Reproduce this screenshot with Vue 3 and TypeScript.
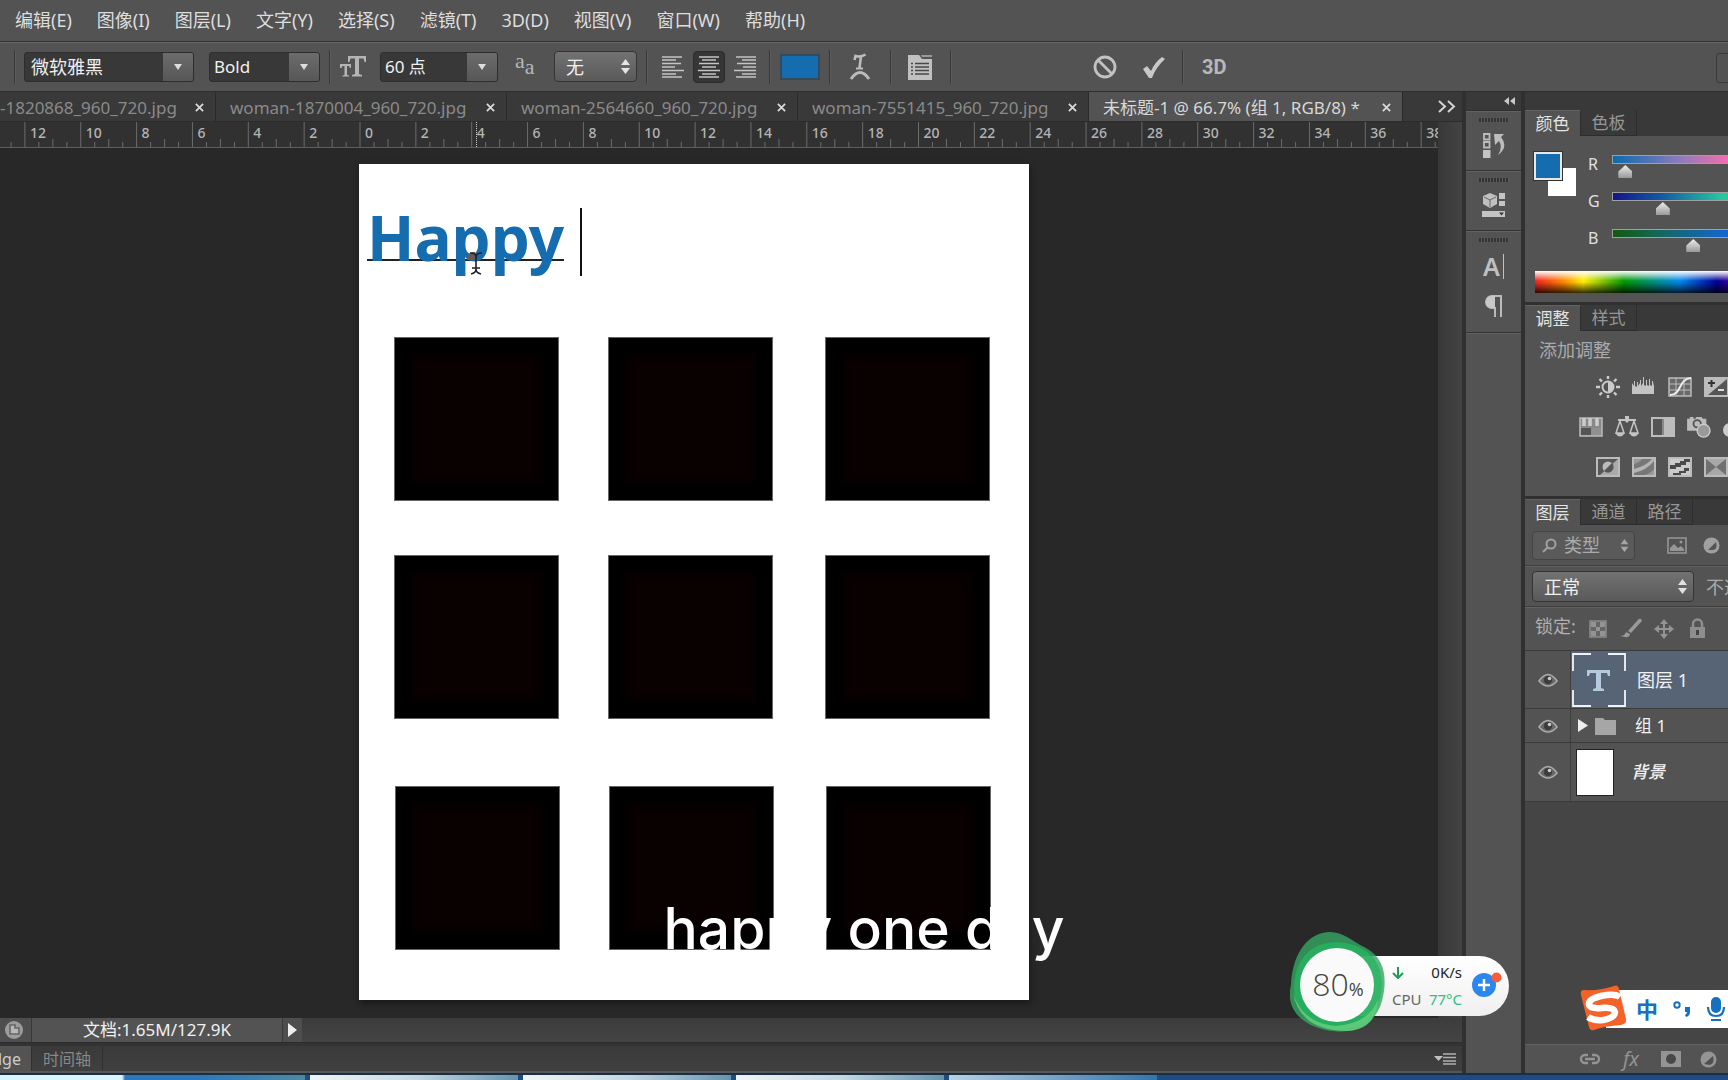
<script setup lang="ts">
import { ref } from 'vue'

interface DocTab { title: string; active?: boolean }
interface Channel { label: string; value: number; track: string }

const menus = ['编辑(E)', '图像(I)', '图层(L)', '文字(Y)', '选择(S)', '滤镜(T)', '3D(D)', '视图(V)', '窗口(W)', '帮助(H)']

const docTabs: DocTab[] = [
  { title: '-1820868_960_720.jpg' },
  { title: 'woman-1870004_960_720.jpg' },
  { title: 'woman-2564660_960_720.jpg' },
  { title: 'woman-7551415_960_720.jpg' },
  { title: '未标题-1 @ 66.7% (组 1, RGB/8) *', active: true },
]

const RULER_ORIGIN = 360
const RULER_STEP = 55.85
const majors = Array.from({ length: 27 }, (_, i) => i - 7).map(n => ({
  x: RULER_ORIGIN + n * RULER_STEP,
  label: n < -6 ? '' : String(Math.abs(n * 2)),
}))

const frames = [
  { x: 35, y: 173 }, { x: 249, y: 173 }, { x: 466, y: 173 },
  { x: 35, y: 391 }, { x: 249, y: 391 }, { x: 466, y: 391 },
  { x: 36, y: 622 }, { x: 250, y: 622 }, { x: 467, y: 622 },
]

const channels = ref<Channel[]>([
  { label: 'R', value: 13, track: 'linear-gradient(90deg, #0a6bae, #8a7cba 55%, #ff6bae)' },
  { label: 'G', value: 104, track: 'linear-gradient(90deg, #14148c, #1358a4 40%, #26c8a0 92%)' },
  { label: 'B', value: 178, track: 'linear-gradient(90deg, #13590f, #13685a 38%, #1366d8)' },
])

const alignment = ref('center')
</script>

<template>
  <div class="app">
    <nav class="menubar">
      <button v-for="m in menus" :key="m" class="menu">{{ m }}</button>
    </nav>

    <div class="options">
      <span class="sep first"></span>
      <label class="combo family"><select aria-label="字体"><option>微软雅黑</option></select><i></i></label>
      <label class="combo weight"><select aria-label="字体样式"><option>Bold</option></select><i></i></label>
      <span class="sep"></span>
      <svg class="ico-tt" width="26" height="26" viewBox="0 0 26 26" fill="#b4b4b4">
        <path d="M8 2h18v6h-1.500l-1-3.500H19V20l3 1v1.500h-10V21l3-1V4.500h-4.500L9.500 8H8z" />
        <path d="M0 10h11v4h-1l-1-2H7v9l2 .6v1H2.500v-1L4.500 21v-9h-2l-1 2H0z" />
      </svg>
      <label class="combo size"><select aria-label="字号"><option>60 点</option></select><i></i></label>
      <span class="aa"><span>a</span><span>a</span></span>
      <label class="drop anti"><select aria-label="消除锯齿"><option>无</option></select><svg width="9" height="15" viewBox="0 0 9 15"><path d="M0 6l4.500-6L9 6zM0 9l4.500 6L9 9z" fill="#e4e4e4" /></svg></label>
      <span class="sep"></span>
      <div class="aligns">
        <button v-for="a in ['left', 'center', 'right']" :key="a" :aria-label="a" :class="['align', { on: alignment === a }]" @click="alignment = a">
          <svg width="22" height="22" viewBox="0 0 22 22" stroke="#c4c4c4" stroke-width="1.300">
            <path v-if="a === 'left'" d="M0 1h20M0 4h14M0 7.500h19M0 11h13M0 14.500h22M0 18h14M0 21h20" />
            <path v-else-if="a === 'center'" d="M1 1h20M4 4h14M1 7.500h20M4 11h14M0 14.500h22M4 18h14M1 21h20" />
            <path v-else d="M2 1h20M8 4h14M3 7.500h19M9 11h13M0 14.500h22M8 18h14M2 21h20" />
          </svg>
        </button>
      </div>
      <span class="sep"></span>
      <button class="ink" aria-label="文本颜色"></button>
      <span class="sep"></span>
      <button class="tool warp" aria-label="变形文字">
        <svg width="22" height="28" viewBox="0 0 22 28" fill="none" stroke="#bcbcbc"><path d="M5.500 7l1-4q5 1.500 10-1.500M12 3l-1.500 12" stroke-width="2.600" /><path d="M7 15.500h7" stroke-width="2" /><path d="M2 26q9-13 18 0" stroke-width="3" /></svg>
      </button>
      <span class="sep"></span>
      <button class="tool panel" aria-label="字符面板">
        <svg width="24" height="26" viewBox="0 0 24 26"><path d="M0 1h11l3 4h10v21H0z" fill="#c0c0c0" /><path d="M13 1h11v2H14z" fill="#999" /><path d="M3 9.500h2M7 9.500h14M3 13h2M7 13h14M3 16.500h2M7 16.500h14M3 20h2M7 20h14" stroke="#474747" stroke-width="1.500" /></svg>
      </button>
      <span class="sep"></span>
      <button class="tool cancel" aria-label="取消">
        <svg width="24" height="24" viewBox="0 0 24 24" fill="none" stroke="#c2c2c2" stroke-width="2.800"><circle cx="12" cy="12" r="10" /><path d="M5 5l14 14" /></svg>
      </button>
      <button class="tool commit" aria-label="提交">
        <svg width="24" height="22" viewBox="0 0 24 22"><path d="M1 13l4-3 4 5Q13 6 20 1l3 2Q14 11 10 22H7z" fill="#c8c8c8" /></svg>
      </button>
      <span class="sep"></span>
      <button class="tool three">3D</button>
      <button class="edge" aria-label="工作区"></button>
    </div>

    <div class="work">
      <main class="editor">
        <div class="tabs">
          <div v-for="t in docTabs" :key="t.title" :class="['tab', { active: t.active }]">
            <span>{{ t.title }}</span>
            <button class="close" aria-label="关闭"><svg width="9" height="9" viewBox="0 0 10 10" stroke="#dadada" stroke-width="2"><path d="M1 1l8 8M9 1L1 9" /></svg></button>
          </div>
          <button class="more" aria-label="更多"><svg width="18" height="13" viewBox="0 0 18 13" fill="none" stroke="#d4d4d4" stroke-width="2"><path d="M1 1l6 5.500-6 5.500M10 1l6 5.500-6 5.500" /></svg></button>
        </div>

        <div class="stage">
          <div class="view">
            <svg class="ruler" width="100%" height="26">
              <g v-for="m in majors" :key="m.x" stroke="#6c6c6c">
                <path :d="`M${m.x} 0V25M${m.x + 14} 20V25M${m.x + 28} 17V25M${m.x + 42} 20V25`" />
                <text v-if="m.label" :x="m.x + 5" y="16">{{ m.label }}</text>
              </g>
              <path d="M476.500 0V25" stroke="#ccc" stroke-dasharray="1 1" />
            </svg>
            <div class="canvas">
              <div class="page">
                <div v-for="(f, i) in frames" :key="i" class="frame" :style="{ left: f.x + 'px', top: f.y + 'px' }"></div>
                <span class="headline">Happy</span>
                <span class="caret"></span>
                <svg class="cursor" width="20" height="30" viewBox="0 0 20 30" fill="none" stroke="#222" stroke-width="1.600"><path d="M1 8l5-4h3v8H1z" fill="#6d5a55" stroke="none" /><path d="M4 5q6 0 6 4v12q0 4-5 5M16 5q-6 0-6 4v12q0 4 5 5M6 20h8" /></svg>
              </div>
            </div>
          </div>
          <div class="vscroll"></div>
        </div>

        <div class="status">
          <button class="badge" aria-label="状态"><svg width="18" height="18" viewBox="0 0 18 18"><circle cx="9" cy="9" r="9" fill="#9c9c9c" /><path d="M5 4h5v3h4v6H5z" fill="#b8b8b8" stroke="#666" stroke-width="1.600" /></svg></button>
          <span class="doc">文档:1.65M/127.9K</span>
          <button class="go" aria-label="展开"><svg width="9" height="14" viewBox="0 0 9 14"><path d="M0 0l9 7-9 7z" fill="#eee" /></svg></button>
        </div>
        <div class="timeline">
          <button class="ttab on">dge</button>
          <button class="ttab">时间轴</button>
          <svg class="flyout" width="22" height="12" viewBox="0 0 22 12"><path d="M0 3h9L4.500 8z" fill="#c0c0c0" /><path d="M9 1h13M9 4.500h13M9 8h13M9 11h13" stroke="#b0b0b0" stroke-width="1.300" /></svg>
        </div>
      </main>

      <aside class="dock">
        <div class="dockhead"><svg width="11" height="8" viewBox="0 0 11 8"><path d="M5 0v8L0 4zM11 0v8L6 4z" fill="#c8c8c8" /></svg></div>
        <div class="cell"><span class="grip"></span>
          <button aria-label="历史记录"><svg width="24" height="27" viewBox="0 0 24 27"><path d="M2 2h5.500v5.500H2zM2 10h5.500v5.500H2z" fill="none" stroke="#bbb" stroke-width="1.800" /><path d="M1 18h7.500v8H1z" fill="#c4c4c4" /><path d="M12 2h10l-3 3q8 10-3 18 5-8 1-14l-4 4z" fill="#bdbdbd" /></svg></button>
        </div>
        <div class="cell"><span class="grip"></span>
          <button aria-label="属性"><svg width="24" height="26" viewBox="0 0 24 26"><path d="M1 4l7-3 7 3v8l-7 4-7-4z" fill="#c0c0c0" /><path d="M2 5l6 3 6-3M8 8v7" fill="none" stroke="#666" /><path d="M17 1h6v6h-6zM17 9h6v5h-6zM0 19h23v6H0z" fill="#c4c4c4" /><path d="M17 20.500h5l-2.500 3z" fill="#333" /></svg></button>
        </div>
        <div class="cell tall"><span class="grip"></span>
          <button class="char" aria-label="字符">A<span></span></button>
          <button aria-label="段落"><svg width="18" height="22" viewBox="0 0 18 22"><path d="M17 1H7a6 6 0 0 0 0 12h3v9M16 1v21" fill="none" stroke="#bbb" stroke-width="2" /><path d="M10 1H7a6 6 0 0 0 0 12h3z" fill="#c8c8c8" /></svg></button>
        </div>
        <div class="dockrest"></div>
      </aside>

      <aside class="panels">
        <div class="panelhead"></div>
        <section class="colors">
          <div class="ptabs"><button class="on">颜色</button><button>色板</button></div>
          <div class="mixer">
            <div class="wells"><span class="bgwell"></span><span class="fgwell"></span></div>
            <div class="channels">
              <label v-for="c in channels" :key="c.label">{{ c.label }}<input v-model.number="c.value" type="range" min="0" max="255" :style="{ backgroundImage: c.track }" /></label>
            </div>
          </div>
          <div class="spectrum"></div>
        </section>

        <section class="adjust">
          <div class="ptabs"><button class="on">调整</button><button>样式</button></div>
          <p>添加调整</p>
          <div class="arow">
            <svg viewBox="0 0 24 22"><circle cx="12" cy="11" r="5.500" fill="none" stroke="#ccc" stroke-width="2" /><path d="M12 6a5 5 0 0 1 0 10z" fill="#ccc" /><path d="M12 0v3M12 19v3M0 11h4M20 11h4M3.500 3l2.500 2.500M18 16.500l2.500 2.500M3.500 19L6 16.500M18 5.500L20.500 3" stroke="#ccc" stroke-width="2.400" /></svg>
            <svg viewBox="0 0 24 22"><path d="M0 18V7l2 3V5h1v5l2 1V6h1v4l2-3V4h1v6l2-3V1h1v8l2 1V4h1v5l2 1V3h1v6l2 1V5h1v5l1-4v12z" fill="#c4c4c4" /></svg>
            <svg viewBox="0 0 24 22"><path d="M1 2h22v18H1z" fill="#6a6a6a" stroke="#bbb" stroke-width="1.500" /><path d="M1 8h22M1 14h22M8 2v18M16 2v18" stroke="#bbb" /><path d="M2 19c12 0 8-16 21-17" fill="none" stroke="#eee" stroke-width="2" /></svg>
            <svg viewBox="0 0 24 22"><path d="M0 1h24v20H0z" fill="#bcbcbc" /><path d="M23 3v16H4z" fill="#555" /><path d="M4 7h7M7.500 4v7" stroke="#333" stroke-width="2" /><path d="M14 14h6" stroke="#ddd" stroke-width="2" /></svg>
          </div>
          <div class="arow wide">
            <svg viewBox="0 0 24 22"><path d="M1 2h22v18H1z" fill="#888" stroke="#bbb" stroke-width="1.500" /><path d="M5 2v8M11 2v8M18 2v8" stroke="#ccc" stroke-width="3.500" /><path d="M2 12h20v7H2z" fill="#555" /><path d="M12 12h10v7H12z" fill="#909090" /></svg>
            <svg viewBox="0 0 24 22"><path d="M10 0h4v3h7v2h-7l-2 2-2-2H3V3h7z" fill="#c4c4c4" /><path d="M5 5L1 17h8zM19 5l-4 12h8z" fill="none" stroke="#c4c4c4" stroke-width="1.500" /><path d="M0 17h10q-5 7-10 0zM14 17h10q-5 7-10 0z" fill="#c4c4c4" /></svg>
            <svg viewBox="0 0 24 22"><path d="M0 1h24v20H0z" fill="#bcbcbc" /><path d="M2 3h9v16H2z" fill="#555" /><path d="M11 3h2v16h-2z" fill="#888" /></svg>
            <svg viewBox="0 0 26 24"><path d="M0 3h3V1h4v2h2l1-2h6l1 2h4v13H0z" fill="#bbb" /><circle cx="11" cy="8.500" r="4" fill="#bbb" stroke="#555" stroke-width="2" /><circle cx="18" cy="16" r="7" fill="#999" stroke="#ccc" stroke-width="1.500" /></svg>
            <svg viewBox="0 0 24 22"><circle cx="12" cy="7" r="6" fill="#bbb" /><circle cx="7" cy="14" r="7" fill="#ccc" /></svg>
          </div>
          <div class="arow">
            <svg viewBox="0 0 24 22"><path d="M1 2h22v18H1z" fill="#575757" stroke="#bbb" stroke-width="2" /><path d="M22 3v16H4z" fill="#aaa" /><circle cx="12" cy="11" r="5.500" fill="#bbb" /><path d="M8 15a5.500 5.500 0 0 0 8-8z" fill="#555" /></svg>
            <svg viewBox="0 0 24 22"><path d="M1 2h22v18H1z" fill="#777" stroke="#bbb" stroke-width="2" /><path d="M2 13Q14 10 20 3h2v2Q15 14 2 17z" fill="#b4b4b4" /><path d="M2 3h8Q7 7 2 8zM22 19h-9q6-2 9-6z" fill="#9a9a9a" /></svg>
            <svg viewBox="0 0 24 22"><path d="M1 2h22v18H1z" fill="#ccc" stroke="#bbb" stroke-width="2" /><path d="M2 9h5V7h5V5h4V3h6v3h-4v3h-5v2H8v2H2zM5 19v-2h6v-2h5v-3h5v3h-3v2h-5v2z" fill="#4b4b4b" /></svg>
            <svg viewBox="0 0 24 22"><path d="M1 2h22v18H1z" fill="#707070" stroke="#bbb" stroke-width="2" /><path d="M2 3h20L12 11l10 8H2l10-8z" fill="#a8a8a8" /></svg>
          </div>
        </section>

        <section class="layers">
          <div class="ptabs"><button class="on">图层</button><button>通道</button><button>路径</button></div>
          <div class="filter">
            <label class="drop kind"><svg class="lens" width="15" height="15" viewBox="0 0 15 15" fill="none" stroke="#a0a0a0" stroke-width="2"><circle cx="9" cy="6" r="4.500" /><path d="M6 9l-5 5" /></svg><select aria-label="图层类型"><option>类型</option></select><svg width="9" height="13" viewBox="0 0 9 15"><path d="M0 6l4.500-6L9 6zM0 9l4.500 6L9 9z" fill="#a4a4a4" /></svg></label>
            <svg width="20" height="17" viewBox="0 0 20 17"><path d="M1 1h18v15H1z" fill="none" stroke="#969696" stroke-width="1.600" /><path d="M3 14v-3l4-4 4 4 3-2 3 3v2z" fill="#969696" /><circle cx="14" cy="5" r="1.500" fill="#969696" /></svg>
            <svg width="17" height="17" viewBox="0 0 17 17"><circle cx="8.500" cy="8.500" r="8" fill="#a0a0a0" /><path d="M5 13l8-8q2 7-3 8z" fill="#555" /></svg>
          </div>
          <div class="blend">
            <label class="drop mode"><select aria-label="混合模式"><option>正常</option></select><svg width="9" height="15" viewBox="0 0 9 15"><path d="M0 6l4.500-6L9 6zM0 9l4.500 6L9 9z" fill="#e0e0e0" /></svg></label>
            <span>不透</span>
          </div>
          <div class="locks">
            <span>锁定:</span>
            <svg viewBox="0 0 22 22"><path d="M3 3h16v16H3z" fill="#666" stroke="#8c8c8c" stroke-width="1.500" /><path d="M4 4h5v5H4zM13 4h5v5h-5zM9 9h4v4H9zM4 13h5v5H4zM13 13h5v5h-5z" fill="#949494" /></svg>
            <svg viewBox="0 0 22 22"><path d="M21 1q2 2-1 4l-9 10-3-2 9-10q2-3 4-2zM0 18q5 0 6-4l4 2q0 5-10 2z" fill="#999" /></svg>
            <svg viewBox="0 0 22 22"><path d="M11 4v14M4 11h14" stroke="#949494" stroke-width="2" /><path d="M11 1l4 5H7zM11 21l4-5H7zM1 11l5-4v8zM21 11l-5-4v8z" fill="#949494" /></svg>
            <svg viewBox="0 0 22 22"><path d="M4 9h15v11H4z" fill="#8e8e8e" /><path d="M7 10V6a4.500 4.500 0 0 1 9 0v4" fill="none" stroke="#8e8e8e" stroke-width="2.500" /><path d="M10 12h3v5h-3z" fill="#444" /></svg>
          </div>
          <div v-for="(name, i) in ['图层 1', '组 1', '背景']" :key="name" :class="['layer', 'l' + i]">
            <button class="eye" aria-label="可见性"><svg width="20" height="14" viewBox="0 0 20 14"><path d="M1 8q9-13 18 0-9 10-18 0z" fill="#666" stroke="#aaa" stroke-width="1.600" /><circle cx="10" cy="7" r="4" fill="#3c3c3c" /><circle cx="11.500" cy="5.500" r="1.800" fill="#ccc" /></svg></button>
            <div class="body">
              <svg v-if="i === 0" width="54" height="54" viewBox="0 0 54 54" fill="none" stroke="#f0f4f8" stroke-width="1.800"><path d="M1 18V1h18M36 1h17v17M1 37v16h18M36 53h17V37" /><path d="M15 17h23v6h-2l-1-3h-6v15l3 1v2H21v-2l3-1V20h-6l-1 3h-2z" fill="#b4cade" stroke="none" /></svg>
              <svg v-else-if="i === 1" width="39" height="18" viewBox="0 0 39 18"><path d="M0 2l10 6.500L0 15z" fill="#eee" /><path d="M17 1h8l2 2h11v15H17z" fill="#a6a6a6" /></svg>
              <span v-else class="sheet"></span>
              <span class="name">{{ name }}</span>
            </div>
          </div>
          <div class="void"></div>
          <div class="tools">
            <button aria-label="链接图层"><svg width="22" height="12" viewBox="0 0 22 12" fill="none" stroke="#949494" stroke-width="2.400"><path d="M9 2H6a4 4 0 0 0 0 8h3M13 2h3a4 4 0 0 1 0 8h-3M6 6h10" /></svg></button>
            <button class="fx" aria-label="图层样式">fx</button>
            <button aria-label="蒙版"><svg width="20" height="16" viewBox="0 0 20 16"><path d="M0 0h20v16H0z" fill="#949494" /><circle cx="10" cy="8" r="5" fill="#484848" /></svg></button>
            <button aria-label="调整图层"><svg width="17" height="17" viewBox="0 0 17 17"><circle cx="8.500" cy="8.500" r="8" fill="#949494" /><path d="M4 13l9-8q2 7-3 9z" fill="#505050" /></svg></button>
          </div>
        </section>
      </aside>
    </div>

    <div class="taskbar"><span></span><span></span><span></span><span></span><span></span></div>

    <div class="caption">happy one day</div>

    <div class="monitor">
      <div class="pill">
        <div class="stats">
          <div><svg width="12" height="12" viewBox="0 0 12 12" fill="none" stroke="#1d9c54" stroke-width="2"><path d="M6 0v11M1 6l5 5 5-5" /></svg><span>0K/s</span></div>
          <div><span class="cpu">CPU</span><span class="temp">77°C</span></div>
        </div>
        <svg width="30" height="26" viewBox="0 0 30 26"><circle cx="12" cy="14" r="12" fill="#2b87ee" /><path d="M12 8v12M6 14h12" stroke="#fff" stroke-width="2.500" /><circle cx="24.500" cy="6.500" r="5" fill="#fa5b3c" /></svg>
      </div>
      <svg class="blob" width="100" height="104" viewBox="0 0 100 104">
        <path d="M38 1C52 0 62 10 76 17 94 27 96 44 94 60 92 72 90 78 84 86 76 99 56 103 36 99 12 94-5 78 1 54 2 28 14 3 38 1z" fill="#35a862" fill-opacity=".8" />
        <path d="M30 14C52 6 80 16 88 34 97 56 90 82 70 94 42 105 10 92 5 67 1 42 12 20 30 14z" fill="#25b562" fill-opacity=".75" />
        <path d="M3 62Q12 92 46 95 80 92 88 68 86 98 58 100 10 100 3 62z" fill="#63cf7c" fill-opacity=".85" />
        <circle cx="47" cy="54" r="37" fill="#fafafa" />
      </svg>
      <div class="pct"><span>80</span><small>%</small></div>
    </div>

    <div class="ime">
      <svg class="sogou" width="48" height="48" viewBox="0 0 48 48"><path d="M4 6Q20 7 34 2q4-2 5 3l7 30q1 5-5 6-16 1-27 5-4 1-5-3L1 11q-1-5 3-5z" fill="#f4622a" /><path d="M40 13q-5-4-19-1-13 3-12 9 1 4 13 3 12-1 13 4 0 6-12 8-9 1-15-3" fill="none" stroke="#fff" stroke-width="6.500" /></svg>
      <span class="zh">中</span>
      <svg width="18" height="20" viewBox="0 0 18 20"><circle cx="4" cy="6" r="2.700" fill="none" stroke="#1670c0" stroke-width="2" /><path d="M12 8h5v5q0 4-4 5l-1-2q2-1 2-3h-2z" fill="#1670c0" /></svg>
      <svg width="20" height="26" viewBox="0 0 20 26"><rect x="5" y="1" width="10" height="16" rx="5" fill="#1670c0" /><path d="M2 11q0 9 8 9t8-9M5 24h10" fill="none" stroke="#1670c0" stroke-width="2.200" /></svg>
    </div>
  </div>
</template>

<style>
body { margin: 0; background: #282828; }
</style>

<style scoped>
* { box-sizing: border-box; }
.app { position: relative; height: 100vh; min-height: 900px; display: flex; flex-direction: column; overflow: hidden; background: #535353; color: #ddd; font-family: "Noto Sans", "Noto Sans CJK SC", sans-serif; font-size: 18px; line-height: 24px; }
button { border: 0; padding: 0; background: none; color: inherit; font: inherit; white-space: nowrap; }
select { appearance: none; border: 0; background: none; color: #f0f0f0; font: inherit; padding: 0; outline: 0; }
svg { display: block; flex: none; }
.menubar { flex: none; height: 42px; display: flex; align-items: center; gap: 25px; padding: 0 0 2px 15px; border-bottom: 1px solid #323232; color: #dedede; }
.options { flex: none; height: 50px; display: flex; align-items: center; padding-bottom: 1px; border-top: 1px solid #666; border-bottom: 1px solid #303030; overflow: hidden; }
.sep { flex: none; width: 2px; height: 34px; border-left: 1px solid #383838; border-right: 1px solid #5c5c5c; }
.first { margin: 0 8px 0 14px; }
.combo { flex: none; position: relative; height: 30px; display: flex; border: 1px solid #2e2e2e; border-radius: 3px; background: #383838; overflow: hidden; }
.combo select { width: 100%; padding-left: 6px; }
.combo i { flex: none; width: 30px; background: linear-gradient(#6c6c6c, #575757); display: grid; place-items: center; pointer-events: none; }
.combo i::after { content: ""; border: 4px solid transparent; border-top: 6px solid #ddd; border-bottom: 0; }
.family { width: 170px; margin-right: 15px; }
.weight { width: 111px; margin-right: 9px; }
.weight select, .size select { padding-left: 4px; font-size: 17px; }
.size { width: 118px; margin: 0 17px 0 14px; }
.ico-tt { margin-left: 9px; }
.aa { width: 22px; display: flex; margin-right: 17px; color: #b8b8b8; font-family: "Liberation Serif", serif; font-size: 22px; }
.aa span:first-child { margin-top: -6px; }
.drop { flex: none; display: flex; align-items: center; height: 31px; border: 1px solid #343434; border-radius: 4px; background: linear-gradient(#727272, #5a5a5a); padding: 0 6px 0 11px; }
.drop select { flex: 1; min-width: 0; }
.anti { width: 83px; margin-right: 9px; }
.aligns { display: flex; gap: 4px; margin: 0 8px 0 9px; }
.align { width: 32px; height: 32px; display: grid; place-items: center; border-radius: 4px; }
.align.on { background: #363636; border: 1px solid #2c2c2c; }
.ink { flex: none; width: 40px; height: 26px; margin: 0 9px; background: #156db0; border: 2px solid #34495a; }
.tool { flex: none; display: grid; place-items: center; }
.warp { margin: 0 19px 0 18px; }
.panel { margin: 0 18px 0 16px; }
.cancel { margin-left: 141px; }
.commit { margin: 0 16px 0 25px; }
.three { margin-left: 18px; font-family: Roboto, sans-serif; font-weight: 700; font-size: 20px; color: #b8b8b8; }
.edge { flex: none; align-self: flex-start; width: 40px; height: 30px; margin: 10px -28px 0 auto; border: 1px solid #3a3a3a; border-radius: 3px; }

.work { flex: 1; min-height: 0; display: flex; }
.editor { flex: 1; min-width: 0; display: flex; flex-direction: column; }
.tabs { flex: none; height: 30px; display: flex; background: #393939; border-bottom: 1px solid #2c2c2c; }
.tab { flex: none; width: 291px; display: flex; align-items: center; justify-content: space-between; padding: 3px 11px 0 14px; border-right: 1px solid #2a2a2a; color: #8a8a8a; white-space: nowrap; font-size: 17px; }
.tab:first-child { width: 216px; padding-left: 0; }
.close { margin-bottom: 2px; }
.tab.active { width: 314px; background: #535353; color: #d8d8d8; }
.more { margin: 0 6px 0 auto; }
.stage { flex: 1; min-height: 0; display: flex; }
.view { flex: 1; min-width: 0; display: flex; flex-direction: column; }
.ruler { background: #313131; border-bottom: 1px solid #5c5c5c; }
.ruler text { fill: #b4b4b4; stroke: none; font-size: 14px; font-weight: 500; }
.canvas { flex: 1; min-height: 0; padding: 16px 0 0 359px; background: #282828; }
.page { position: relative; width: 670px; height: 836px; background: #fff; box-shadow: 1px 3px 6px #181818; }
.frame { position: absolute; width: 165px; height: 164px; background: #090000; border: 1px solid #666; box-shadow: inset 0 0 8px 16px #000; }
.headline { position: absolute; left: 8px; top: 43px; width: 197px; height: 54px; border-bottom: 2px solid #222; color: #156db0; font-size: 62px; font-weight: 700; line-height: 60px; }
.caret { position: absolute; left: 221px; top: 44px; width: 2px; height: 68px; background: #111; }
.cursor { position: absolute; left: 107px; top: 84px; }
.vscroll { flex: none; width: 24px; background: linear-gradient(90deg, #383838, #434343); }
.status { flex: none; height: 25px; display: flex; background: linear-gradient(#3c3c3c, #444); border-bottom: 1px solid #2c2c2c; color: #f0f0f0; font-size: 17px; }
.badge { width: 32px; padding-left: 5px; background: #4e4e4e; border-right: 1px solid #393939; }
.doc { width: 251px; text-align: center; background: #535353; border-right: 1px solid #3a3a3a; }
.go { width: 19px; display: grid; place-items: center; background: #4e4e4e; }
.timeline { flex: none; height: 30px; display: flex; align-items: stretch; border-top: 3px solid #333; border-bottom: 2px solid #575757; background: linear-gradient(#3a3a3a, #404040); font-size: 16px; }
.ttab { width: 71px; border-right: 1px solid #303030; color: #888; }
.ttab.on { width: 32px; background: #535353; color: #ccc; text-align: right; padding-right: 10px; direction: rtl; overflow: hidden; }
.flyout { margin: 7px 6px 0 auto; }

.dock { flex: none; width: 59px; display: flex; flex-direction: column; border-left: 4px solid #303030; background: #535353; }
.dockhead { height: 19px; display: flex; align-items: center; justify-content: flex-end; padding-right: 6px; background: #393939; border-bottom: 1px solid #303030; }
.cell { height: 60px; display: flex; flex-direction: column; align-items: center; gap: 10px; padding-top: 6px; border-top: 1px solid #626262; border-bottom: 1px solid #333; }
.tall { height: 102px; gap: 9px; }
.tall svg { margin-top: 5px; }
.grip { width: 30px; height: 4px; background: repeating-linear-gradient(90deg, #333 0 2px, #5a5a5a 2px 3px); }
.char { display: flex; align-items: center; gap: 3px; font-size: 25px; line-height: 30px; color: #c0c0c0; font-weight: 600; }
.char span { width: 1px; height: 25px; background: #c0c0c0; }
.dockrest { flex: 1; border-top: 1px solid #626262; }

.panels { flex: none; width: 207px; display: flex; flex-direction: column; border-left: 4px solid #303030; overflow: hidden; }
.panelhead { flex: none; height: 18px; background: #393939; }
.ptabs { height: 26px; display: flex; background: #393939; font-size: 17px; color: #969696; }
.ptabs button { width: 56px; border-right: 1px solid #2d2d2d; border-bottom: 1px solid #2d2d2d; }
.ptabs .on { background: #535353; color: #e4e4e4; border-bottom: 0; border-top: 1px solid #626262; }
.panels section { flex: none; overflow: hidden; background: #535353; border-bottom: 3px solid #303030; }
.colors { height: 195px; }
.mixer { display: flex; height: 135px; }
.wells { position: relative; flex: none; width: 63px; }
.wells span { position: absolute; width: 28px; height: 28px; }
.fgwell { left: 9px; top: 16px; background: #156db0; border: 2px solid #e8e8e8; outline: 1px solid #333; }
.bgwell { left: 23px; top: 32px; background: #fff; }
.channels { padding-top: 16px; }
.channels label { width: 145px; height: 37px; display: flex; justify-content: space-between; font-size: 16px; color: #e0e0e0; }
.channels input { appearance: none; flex: none; width: 121px; height: 9px; margin: 3px 0 0; border: 1px solid #a0a0a0; }
.channels input::-webkit-slider-runnable-track { height: 7px; }
.channels input::-webkit-slider-thumb { appearance: none; width: 14px; height: 13px; margin-top: 9px; background: linear-gradient(#eee, #999); clip-path: polygon(50% 0, 100% 50%, 100% 100%, 0 100%, 0 50%); }
.spectrum { height: 22px; margin-left: 10px; background: linear-gradient(#fff, #fff0 45%, #0000 50%, #000c), linear-gradient(90deg, #e22, #f80 15%, #fe0 25%, #090 46%, #08e 75%, #009 94%, #309); }
.adjust { height: 194px; }
.adjust p { margin: 0; padding: 7px 0 14px 14px; color: #aaa; }
.arow { display: flex; gap: 12px; padding-left: 71px; height: 40px; }
.arow svg { width: 24px; height: 22px; }
.arow.wide { padding-left: 54px; }
.panels .layers { flex: 1; display: flex; flex-direction: column; border-bottom: 0; }
.layers > div { flex: none; }
.filter { height: 41px; display: flex; align-items: center; padding-left: 7px; border-bottom: 1px solid #3e3e3e; }
.filter > svg { margin-right: 16px; }
.filter .kind { width: 103px; height: 29px; margin-right: 32px; padding: 0 5px 0 9px; gap: 7px; background: #5a5a5a; border-color: #444; }
.kind select { color: #aaa; }
.blend { height: 41px; display: flex; align-items: center; gap: 12px; padding-left: 7px; border-top: 1px solid #626262; border-bottom: 1px solid #3e3e3e; color: #aaa; white-space: nowrap; }
.mode { width: 162px; }
.locks { height: 43px; display: flex; align-items: center; gap: 11px; padding-left: 10px; border-top: 1px solid #626262; color: #b0b0b0; }
.locks span { width: 41px; white-space: nowrap; margin-top: -6px; }
.locks svg { width: 22px; height: 22px; }
.layer { display: flex; border-top: 1px solid #3a3a3a; color: #f2f2f2; }
.eye { width: 46px; display: grid; place-items: center; border-right: 1px solid #3e3e3e; }
.body { flex: 1; display: flex; align-items: center; gap: 11px; padding-left: 1px; white-space: nowrap; }
.l0 { height: 58px; }
.l0 .body { background: #566476; }
.l1 { height: 34px; }
.l1 .body { padding-left: 7px; gap: 18px; }
.l2 { height: 60px; border-bottom: 1px solid #3a3a3a; }
.l2 .body { padding-left: 5px; gap: 17px; }
.l1 .name, .l2 .name { font-size: 17px; }
.l2 .name { font-style: italic; font-weight: 500; }
.sheet { width: 38px; height: 47px; background: #fff; border: 1px solid #222; }
.layers .void { flex: 1; background: #454545; }
.tools { height: 29px; display: flex; align-items: center; gap: 19px; padding-left: 54px; border-top: 1px solid #626262; color: #949494; }
.fx { width: 22px; font-style: italic; font-size: 20px; }
.taskbar { flex: none; height: 7px; display: flex; gap: 5px; border-top: 2px solid #16304a; background: #1d4d80; }
.taskbar span { width: 208px; background: linear-gradient(90deg, #f0f4f8, #c8d8e0 50%, #6694ac); }
.taskbar span:first-child { width: 305px; background: linear-gradient(90deg, #d8f4fc 40%, #2c78bc 41% 65%, #5088a0); }
.taskbar span:last-child { background: linear-gradient(90deg, #b8d0e0, #3474a8); }

.caption { position: absolute; left: 0; right: 0; bottom: 115px; text-align: center; font-family: Inter, sans-serif; font-size: 57px; font-weight: 500; line-height: 72px; color: #fff; }
.monitor { position: absolute; right: 219px; bottom: 45px; width: 219px; height: 104px; }
.pill { position: absolute; left: 50px; right: 0; top: 25px; height: 60px; display: flex; align-items: center; gap: 10px; padding-left: 52px; border-radius: 0 30px 30px 0; background: linear-gradient(#fff, #f0f0f0); }
.pill > svg { margin-top: -4px; }
.stats { width: 70px; font-size: 15px; line-height: 27px; color: #222; }
.stats div { display: flex; align-items: center; justify-content: space-between; }
.stats .cpu { color: #666; }
.stats .temp { color: #2fc080; }
.blob { position: absolute; left: 0; top: 0; }
.pct { position: absolute; left: 8px; top: 31px; width: 80px; display: flex; justify-content: center; align-items: baseline; font-family: "Open Sans", sans-serif; font-weight: 300; font-size: 32px; line-height: 44px; color: #444; }
.pct small { font-size: 18px; font-weight: 400; }
.ime { position: absolute; right: 0; bottom: 52px; width: 122px; height: 38px; display: flex; align-items: center; padding-left: 30px; gap: 15px; background: #fff; overflow: visible; }
.sogou { position: absolute; left: -26px; top: -6px; }
.zh { color: #1670c0; font-size: 22px; font-weight: 700; }
</style>
